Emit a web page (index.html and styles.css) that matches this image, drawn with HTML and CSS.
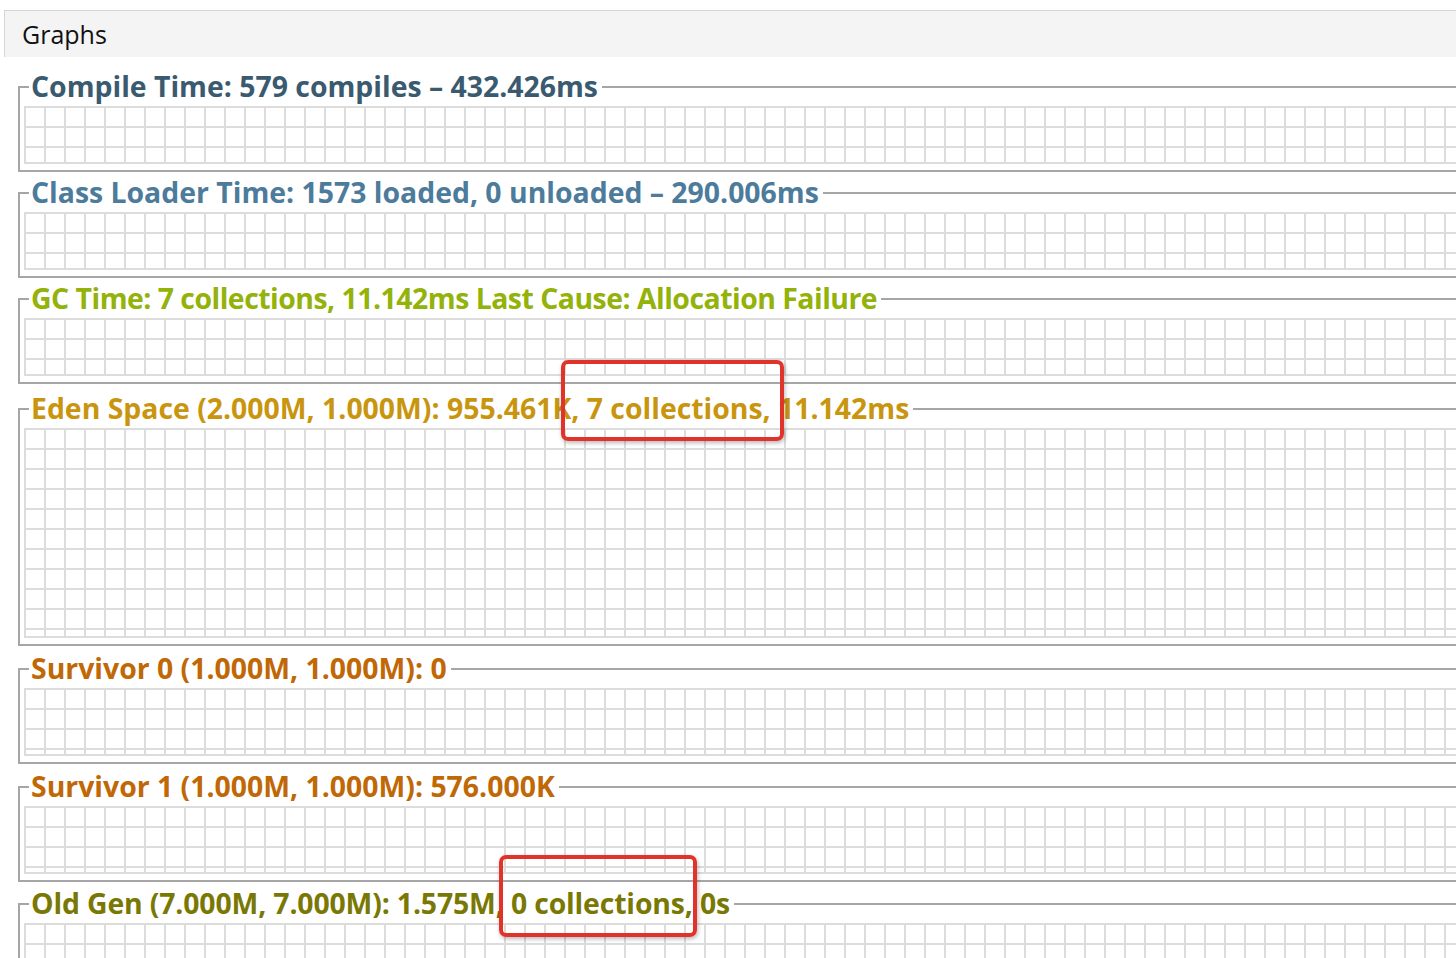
FILE: index.html
```html
<!DOCTYPE html>
<html>
<head>
<meta charset="utf-8">
<title>Graphs</title>
<link rel="stylesheet" href="styles.css">
</head>
<body>
<div class="page">
  <div class="tabbar"><span class="tab-label">Graphs</span></div>
  <div class="panels">
    <section class="panel p-compile">
      <div class="head"><span class="tick"></span><span class="title">Compile Time: 579 compiles – 432.426ms</span><span class="rule"></span></div>
      <div class="grid g-small"></div>
    </section>
    <section class="panel p-class">
      <div class="head"><span class="tick"></span><span class="title">Class Loader Time: 1573 loaded, 0 unloaded – 290.006ms</span><span class="rule"></span></div>
      <div class="grid g-small"></div>
    </section>
    <section class="panel p-gc">
      <div class="head"><span class="tick"></span><span class="title">GC Time: 7 collections, 11.142ms Last Cause: Allocation Failure</span><span class="rule"></span></div>
      <div class="grid g-small"></div>
    </section>
    <section class="panel p-eden">
      <div class="head"><span class="tick"></span><span class="title">Eden Space (2.000M, 1.000M): 955.461K, 7 collections, 11.142ms</span><span class="rule"></span></div>
      <div class="grid g-large"></div>
    </section>
    <section class="panel p-surv">
      <div class="head"><span class="tick"></span><span class="title">Survivor 0 (1.000M, 1.000M): 0</span><span class="rule"></span></div>
      <div class="grid g-mid"></div>
    </section>
    <section class="panel p-surv">
      <div class="head"><span class="tick"></span><span class="title">Survivor 1 (1.000M, 1.000M): 576.000K</span><span class="rule"></span></div>
      <div class="grid g-mid"></div>
    </section>
    <section class="panel p-old">
      <div class="head"><span class="tick"></span><span class="title">Old Gen (7.000M, 7.000M): 1.575M, 0 collections, 0s</span><span class="rule"></span></div>
      <div class="grid g-large"></div>
    </section>
  </div>
  <div class="mark mark-1"></div>
  <div class="mark mark-2"></div>
</div>
</body>
</html>
```

FILE: styles.css
```css
html, body {
  margin: 0;
  padding: 0;
  background: #ffffff;
  height: 958px;
  overflow: hidden;
}

.page {
  position: relative;
  width: 1456px;
  height: 958px;
  overflow: hidden;
  font-family: "Open Sans", "DejaVu Sans", sans-serif;
}

.tabbar {
  margin: 10px 0 0 4px;
  height: 46px;
  background: #f4f4f4;
  border-top: 1px solid #d6d6d6;
  border-left: 1px solid #d6d6d6;
  display: flex;
  align-items: center;
  padding-left: 17px;
}

.tab-label {
  font-size: 25px;
  color: #111111;
}

.panels {
  padding-left: 18px;
  padding-top: 29px;
}

.panel {
  border-left: 2px solid #a6a6a6;
  border-bottom: 2px solid #a6a6a6;
  margin-top: 20px;
}

.panel:first-child {
  margin-top: 0;
}

.p-eden { margin-top: 24px; }
.p-surv { margin-top: 22px; }
.p-old { margin-top: 21px; }

.head {
  height: 2px;
  display: flex;
  align-items: center;
}

.tick {
  width: 9px;
  height: 2px;
  background: #a6a6a6;
  flex: none;
}

.rule {
  flex: 1;
  height: 2px;
  background: #a6a6a6;
}

.title {
  flex: none;
  white-space: nowrap;
  font-weight: 700;
  font-size: 28.4px;
  line-height: 36px;
  padding: 0 4px 2px 2px;
}

.p-compile .title { color: #3a5a70; }
.p-class .title { color: #4c7b9b; }
.p-gc .title { color: #93b20a; letter-spacing: -0.5px; }
.p-eden .title { color: #c9950e; }
.p-surv .title { color: #c06806; }
.p-old .title { color: #7a7804; letter-spacing: -0.15px; }

.grid {
  margin: 18px 0 6px 4px;
  background-color: #ffffff;
  background-image:
    linear-gradient(to right, #dcdcdc 2px, transparent 2px),
    linear-gradient(to bottom, #dcdcdc 2px, transparent 2px);
  background-size: 20px 20px;
  border-bottom: 2px solid #dcdcdc;
}

.g-small { height: 56px; }
.g-mid { height: 66px; }
.g-large { height: 208px; }

.mark {
  position: absolute;
  border: 4px solid #e2332b;
  border-radius: 7px;
  box-shadow: 1px 2px 4px rgba(0, 0, 0, 0.28);
  box-sizing: border-box;
}

.mark-1 {
  left: 561px;
  top: 360px;
  width: 223px;
  height: 81px;
}

.mark-2 {
  left: 499px;
  top: 855px;
  width: 198px;
  height: 82px;
}
```
